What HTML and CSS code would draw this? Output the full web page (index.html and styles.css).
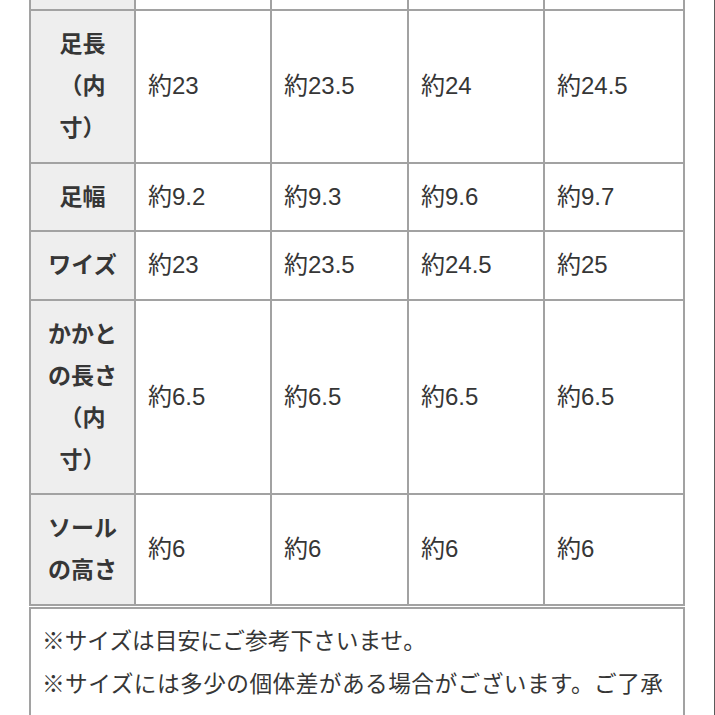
FILE: index.html
```html
<!DOCTYPE html>
<html lang="ja">
<head>
<meta charset="utf-8">
<title>サイズ表</title>
<link rel="stylesheet" href="styles.css">
</head>
<body>
<div class="page">
  <table class="size-table">
    <colgroup>
      <col class="c-head">
      <col class="c-1">
      <col class="c-2">
      <col class="c-3">
      <col class="c-4">
    </colgroup>
    <tbody>
      <tr class="row-cut">
        <th></th><td></td><td></td><td></td><td></td>
      </tr>
      <tr>
        <th>足長（内寸）</th>
        <td>約23</td><td>約23.5</td><td>約24</td><td>約24.5</td>
      </tr>
      <tr>
        <th>足幅</th>
        <td>約9.2</td><td>約9.3</td><td>約9.6</td><td>約9.7</td>
      </tr>
      <tr>
        <th>ワイズ</th>
        <td>約23</td><td>約23.5</td><td>約24.5</td><td>約25</td>
      </tr>
      <tr>
        <th>かかとの長さ（内寸）</th>
        <td>約6.5</td><td>約6.5</td><td>約6.5</td><td>約6.5</td>
      </tr>
      <tr>
        <th>ソールの高さ</th>
        <td>約6</td><td>約6</td><td>約6</td><td>約6</td>
      </tr>
    </tbody>
  </table>
  <div class="note">
    <p>※サイズは目安にご参考下さいませ。</p>
    <p>※サイズには多少の個体差がある場合がございます。ご了承下さいませ。</p>
  </div>
</div>
</body>
</html>
```

FILE: styles.css
```css
html, body {
  margin: 0;
  padding: 0;
  background: #ffffff;
}

body {
  width: 715px;
  height: 715px;
  overflow: hidden;
  box-sizing: border-box;
  border-right: 1px solid #5a5a5a;
  font-family: "Liberation Sans", "Noto Sans CJK JP", sans-serif;
  color: #363636;
  text-spacing-trim: space-all;
}

.page {
  padding-left: 29px;
}

.size-table {
  width: 656px;
  table-layout: fixed;
  border-collapse: collapse;
  border: 2px solid #a2a2a2;
  font-size: 24px;
  line-height: 42px;
}

.c-head { width: 105px; }
.c-1 { width: 136px; }
.c-2 { width: 137px; }
.c-3 { width: 136px; }
.c-4 { width: 140px; }

.size-table th,
.size-table td {
  border: 2px solid #a2a2a2;
  padding: 12px 12px 12.5px;
  vertical-align: middle;
}

.size-table th {
  background: #eeeeee;
  font-weight: bold;
  font-size: 23px;
  text-align: center;
  padding: 12px 10px 12.5px;
}

.size-table td {
  background: #ffffff;
  text-align: left;
  font-weight: normal;
}

.size-table .row-cut th,
.size-table .row-cut td {
  height: 9px;
  padding: 0;
  border-top: hidden;
}

.note {
  width: 656px;
  box-sizing: border-box;
  margin-top: 1px;
  border: 2px solid #a2a2a2;
  padding: 11px 20px 0 11px;
  font-size: 22.7px;
  line-height: 43px;
  text-align: justify;
  color: #363636;
}

.note p {
  margin: 0;
}
```
